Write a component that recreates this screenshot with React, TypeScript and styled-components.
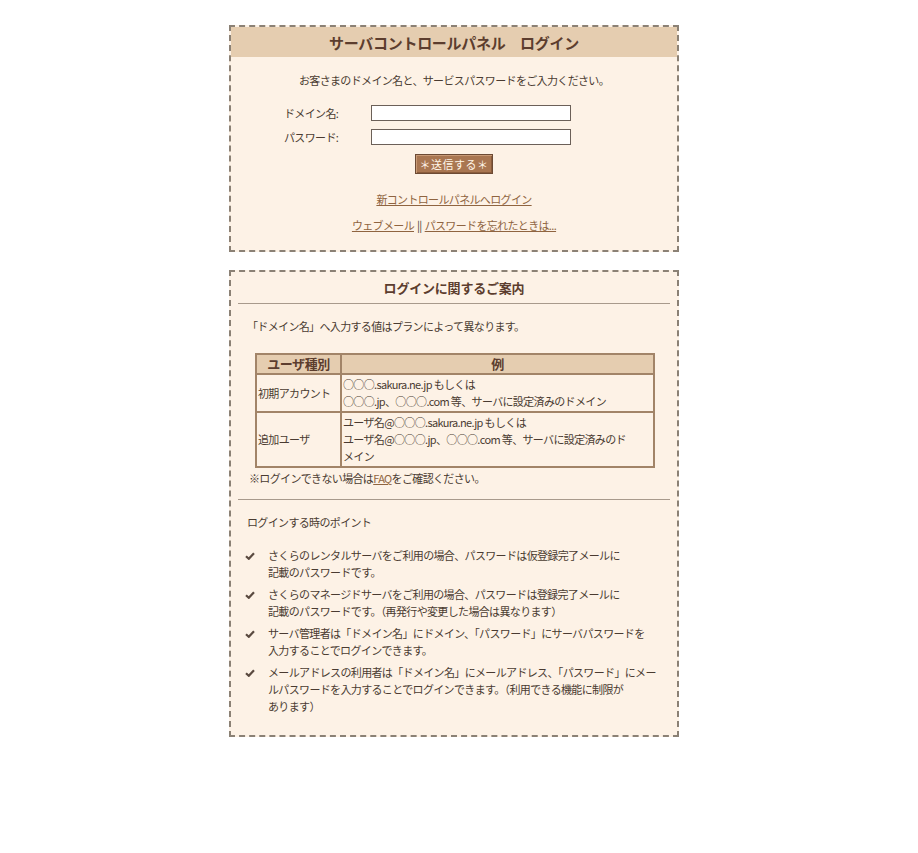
import React from "react";
import styled, { createGlobalStyle } from "styled-components";

const GlobalStyle = createGlobalStyle`
  html, body {
    margin: 0;
    padding: 0;
    background: #ffffff;
  }
  body {
    font-family: "Noto Sans CJK JP", "Noto Sans", sans-serif;
    font-size: 11px;
    letter-spacing: -0.65px;
    color: #4a3b31;
  }
`;

const Page = styled.div`
  padding: 25px 0 40px 229px;
`;

const Box = styled.section<{ $gap?: number }>`
  width: 450px;
  box-sizing: border-box;
  border: 2px dashed #8b8175;
  background: #fdf2e6;
  margin-top: ${(p) => p.$gap ?? 0}px;
`;

const HeaderBand = styled.h1`
  margin: 0;
  height: 30px;
  background: #e5cdb0;
  display: flex;
  align-items: center;
  justify-content: center;
  font-size: 15px;
  font-weight: bold;
  letter-spacing: -0.3px;
  color: #5c3d2e;
`;

const Body1 = styled.div`
  padding: 15px 0 16px;
`;

const Intro = styled.p`
  margin: 0;
  text-align: center;
  line-height: 17px;
`;

const Form = styled.form`
  display: grid;
  grid-template-columns: 87px 200px;
  row-gap: 8px;
  align-items: center;
  margin: 16px 0 0 53px;
`;

const Label = styled.label`
  line-height: 16px;
`;

const Input = styled.input`
  width: 200px;
  height: 16px;
  box-sizing: border-box;
  border: 1px solid #6b6058;
  background: #fff;
  padding: 0 2px;
  margin: 0;
  outline: none;
`;

const ButtonRow = styled.div`
  display: flex;
  justify-content: center;
  margin-top: 9px;
`;

const Submit = styled.button`
  width: 78px;
  height: 20px;
  box-sizing: border-box;
  padding: 0;
  background: #a97651;
  border: 1px solid #6c4a34;
  box-shadow: inset 1px 1px 0 #c89a76, inset -1px -1px 0 #8a5c3c;
  color: #fff5e8;
  font-family: inherit;
  font-size: 11px;
  letter-spacing: 0.5px;
  line-height: 18px;
  white-space: nowrap;
  cursor: pointer;
`;

const LinkRow = styled.div<{ $gap: number }>`
  margin-top: ${(p) => p.$gap}px;
  text-align: center;
  line-height: 17px;
`;

const Link = styled.a`
  color: #8f6440;
  text-decoration: underline;
`;

const Sep = styled.span`
  margin: 0 3px;
`;

const Body2 = styled.div`
  padding: 0 0 20px;
`;

const SectionTitle = styled.h2`
  margin: 0;
  padding: 7px 0;
  text-align: center;
  font-size: 13px;
  line-height: 17px;
  font-weight: bold;
  letter-spacing: -0.2px;
  color: #5c3d2e;
`;

const Rule = styled.hr<{ $gap?: number }>`
  margin: ${(p) => p.$gap ?? 0}px 7px 0;
  border: 0;
  border-top: 1px solid #a89a8c;
  height: 0;
`;

const Para = styled.p<{ $gap: number; $indent: number }>`
  margin: ${(p) => p.$gap}px 0 0 ${(p) => p.$indent}px;
  line-height: 17px;
`;

const Table = styled.table`
  margin: 18px 0 0 24px;
  width: 400px;
  border-collapse: collapse;
  border: 2px solid #a28468;
`;

const Th = styled.th<{ $w?: number }>`
  border: 2px solid #a28468;
  background: #e5cdb0;
  color: #5c3d2e;
  font-size: 13px;
  font-weight: bold;
  letter-spacing: -0.4px;
  line-height: 18px;
  padding: 0;
  text-align: center;
  width: ${(p) => (p.$w ? `${p.$w}px` : "auto")};
`;

const Td = styled.td`
  border: 2px solid #a28468;
  padding: 1px 1px;
  line-height: 17px;
  vertical-align: middle;
  text-align: left;
  white-space: nowrap;
`;

const Points = styled.ul`
  list-style: none;
  margin: 16px 0 0;
  padding: 0 0 0 14px;
  display: flex;
  flex-direction: column;
  gap: 5px;
`;

const Point = styled.li`
  display: grid;
  grid-template-columns: 23px 1fr;
  align-items: start;
  line-height: 17px;
`;

const CheckWrap = styled.span`
  display: block;
  margin-top: 5px;
  width: 10px;
  height: 8px;
  line-height: 0;
`;

const Check = () => (
  <CheckWrap>
    <svg width="10" height="8" viewBox="0 0 10 8" style={{ display: "block" }}>
      <path d="M1 4.2 L3.8 6.8 L9 1.2" fill="none" stroke="#5a4a40" strokeWidth="2.2" strokeLinejoin="miter" />
    </svg>
  </CheckWrap>
);

const points: React.ReactNode[] = [
  <>さくらのレンタルサーバをご利用の場合、パスワードは仮登録完了メールに<br />記載のパスワードです。</>,
  <>さくらのマネージドサーバをご利用の場合、パスワードは登録完了メールに<br />記載のパスワードです。（再発行や変更した場合は異なります）</>,
  <>サーバ管理者は「ドメイン名」にドメイン、「パスワード」にサーバパスワードを<br />入力することでログインできます。</>,
  <>メールアドレスの利用者は「ドメイン名」にメールアドレス、「パスワード」にメー<br />ルパスワードを入力することでログインできます。（利用できる機能に制限が<br />あります）</>,
];

export default function App() {
  return (
    <>
      <GlobalStyle />
      <Page>
        <Box>
          <HeaderBand>サーバコントロールパネル　ログイン</HeaderBand>
          <Body1>
            <Intro>お客さまのドメイン名と、サービスパスワードをご入力ください。</Intro>
            <Form onSubmit={(e) => e.preventDefault()}>
              <Label htmlFor="domain">ドメイン名:</Label>
              <Input id="domain" type="text" />
              <Label htmlFor="pass">パスワード:</Label>
              <Input id="pass" type="password" />
            </Form>
            <ButtonRow>
              <Submit type="button">＊送信する＊</Submit>
            </ButtonRow>
            <LinkRow $gap={17}>
              <Link href="#">新コントロールパネルへログイン</Link>
            </LinkRow>
            <LinkRow $gap={9}>
              <Link href="#">ウェブメール</Link>
              <Sep>||</Sep>
              <Link href="#">パスワードを忘れたときは...</Link>
            </LinkRow>
          </Body1>
        </Box>

        <Box $gap={18}>
          <Body2>
            <SectionTitle>ログインに関するご案内</SectionTitle>
            <Rule />
            <Para $gap={14} $indent={16}>「ドメイン名」へ入力する値はプランによって異なります。</Para>
            <Table>
              <thead>
                <tr>
                  <Th $w={83}>ユーザ種別</Th>
                  <Th>例</Th>
                </tr>
              </thead>
              <tbody>
                <tr>
                  <Td>初期アカウント</Td>
                  <Td>
                    ○○○.sakura.ne.jp もしくは<br />
                    ○○○.jp、○○○.com 等、サーバに設定済みのドメイン
                  </Td>
                </tr>
                <tr>
                  <Td>追加ユーザ</Td>
                  <Td>
                    ユーザ名@○○○.sakura.ne.jp もしくは<br />
                    ユーザ名@○○○.jp、○○○.com 等、サーバに設定済みのド<br />
                    メイン
                  </Td>
                </tr>
              </tbody>
            </Table>
            <Para $gap={2} $indent={18}>
              ※ログインできない場合は<Link href="#">FAQ</Link>をご確認ください。
            </Para>
            <Rule $gap={12} />
            <Para $gap={14} $indent={16}>ログインする時のポイント</Para>
            <Points>
              {points.map((p, i) => (
                <Point key={i}>
                  <Check />
                  <span>{p}</span>
                </Point>
              ))}
            </Points>
          </Body2>
        </Box>
      </Page>
    </>
  );
}
